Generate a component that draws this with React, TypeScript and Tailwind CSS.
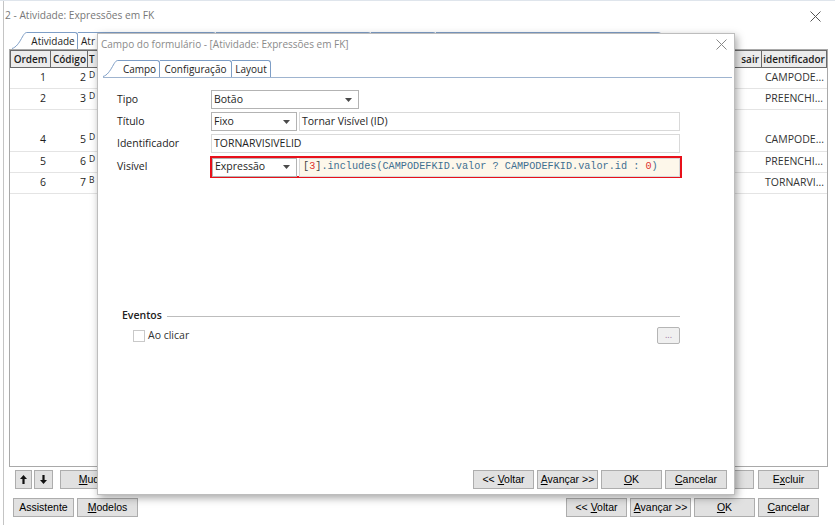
import React from "react";

const ui = "font-['Open_Sans',sans-serif]";
const btnFont = "font-['Liberation_Sans',sans-serif]";

function Caret() {
  return (
    <svg width="7" height="4" viewBox="0 0 7 4">
      <path d="M0 0h7L3.5 4z" fill="#4a4a4a" />
    </svg>
  );
}

function CloseX({ color = "#555" }: { color?: string }) {
  return (
    <svg width="11" height="11" viewBox="0 0 11 11">
      <path d="M0.5 0.5l10 10M10.5 0.5l-10 10" stroke={color} strokeWidth="1" />
    </svg>
  );
}

function TabSlant() {
  return (
    <svg width="15" height="17" viewBox="0 0 15 17" className="shrink-0">
      <path d="M0 16.5C4 15.5 7 11 9.5 6.5S13 0.5 15 0.5" fill="none" stroke="#7e9ec6" strokeWidth="1" />
    </svg>
  );
}

function Btn({ children, className = "" }: { children?: React.ReactNode; className?: string }) {
  return (
    <div
      className={`flex h-[19px] shrink-0 items-center justify-center overflow-hidden whitespace-nowrap border border-[#adadad] bg-[#e1e1e1] text-[10.5px] text-black ${btnFont} ${className}`}
    >
      <span>{children}</span>
    </div>
  );
}

function U({ children }: { children: React.ReactNode }) {
  return <span className="underline">{children}</span>;
}

function Select({ value, className = "" }: { value: string; className?: string }) {
  return (
    <div
      className={`flex h-[19px] shrink-0 items-center justify-between border border-[#b3b3b3] bg-white pl-[2px] pr-[6px] ${className}`}
    >
      <span>{value}</span>
      <Caret />
    </div>
  );
}

function Field({ label, children }: { label: string; children: React.ReactNode }) {
  return (
    <div className="flex items-center">
      <div className="w-[94px] shrink-0 text-[#222]">{label}</div>
      {children}
    </div>
  );
}

const rows = [
  { ordem: "1", codigo: "2", t: "D", id: "CAMPODE...", tall: false },
  { ordem: "2", codigo: "3", t: "D", id: "PREENCHI...", tall: false },
  { ordem: "4", codigo: "5", t: "D", id: "CAMPODE...", tall: true },
  { ordem: "5", codigo: "6", t: "D", id: "PREENCHI...", tall: false },
  { ordem: "6", codigo: "7", t: "B", id: "TORNARVI...", tall: false },
];

function Arrow({ up }: { up: boolean }) {
  return (
    <svg width="7" height="9" viewBox="0 0 7 9" className={up ? "" : "rotate-180"}>
      <path d="M3.5 0L7 4H4.6V9H2.4V4H0z" fill="#111" />
    </svg>
  );
}

export default function App() {
  return (
    <div className={`relative h-[525px] w-[835px] overflow-hidden bg-white text-[10.5px] text-[#1e1e1e] ${ui}`}>
      <div className="h-[1px] bg-[#dfe5ec]" />

      {/* Background window */}
      <div className="ml-[3px] flex h-[524px] flex-col border-l border-[#c4c4c4]">
        {/* Title */}
        <div className="flex h-[30px] items-center justify-between pl-[1px] pr-[14px]">
          <span className="text-[10.2px] text-[#777]">2 - Atividade: Expressões em FK</span>
          <CloseX />
        </div>

        {/* Tabs */}
        <div className="ml-[8px] flex h-[18px] items-end text-[10px]">
          <TabSlant />
          <div className="flex h-[17px] w-[51px] items-center justify-center rounded-tr-[3px] border-t border-r border-[#7e9ec6] bg-white pl-[2px]">
            Atividade
          </div>
          <div className="flex h-[17px] w-[138px] items-center rounded-tr-[3px] border-t border-r border-[#7e9ec6] pl-[3px]">
            Atr
          </div>
          <div className="h-[17px] w-[155px] rounded-tr-[3px] border-t border-r border-[#7e9ec6]" />
          <div className="h-[17px] w-[65px] rounded-tr-[3px] border-t border-r border-[#7e9ec6]" />
          <div className="h-[17px] w-[225px] rounded-tr-[3px] border-t border-r border-[#7e9ec6]" />
        </div>

        {/* Grid */}
        <div className="ml-[5px] flex h-[418px] w-[819px] flex-col border border-[#a9a9a9]">
          <div className="flex h-[18px] bg-[#ececec] text-[10px] font-semibold">
            <div className="flex w-[41px] items-center justify-center border border-[#6a6a6a]">Ordem</div>
            <div className="flex w-[37px] items-center justify-end border-y border-r border-[#6a6a6a] pr-[1px]">Código</div>
            <div className="flex flex-1 items-center border-y border-r border-[#6a6a6a] pl-[1px]">
              <span className="flex-1">T</span>
              <span className="pr-[2px]">sair</span>
            </div>
            <div className="flex w-[65px] items-center justify-center border-y border-r border-[#6a6a6a]">identificador</div>
          </div>
          {rows.map((r) => (
            <div
              key={r.ordem}
              className={`flex border-b border-[#e4e4e4] ${r.tall ? "h-[42px] items-end pb-[3px]" : "h-[21px] items-center"}`}
            >
              <div className="w-[41px] pr-[5px] text-right">{r.ordem}</div>
              <div className="w-[37px] pr-[2px] text-right">{r.codigo}</div>
              <div className="flex-1 pl-[1px]">
                <span className="relative -top-[3px] text-[8.5px]">{r.t}</span>
              </div>
              <div className="w-[65px] pl-[3px] text-[#333]">{r.id}</div>
            </div>
          ))}
        </div>

        {/* Bottom buttons */}
        <div className="mt-[3px] flex items-center pr-[16px]">
          <Btn className="ml-[11px] w-[17px]">
            <Arrow up />
          </Btn>
          <Btn className="ml-[2px] w-[19px]">
            <Arrow up={false} />
          </Btn>
          <Btn className="ml-[7px] w-[100px]">
            <U>M</U>udar ordem
          </Btn>
          <div className="flex-1" />
          <Btn className="w-[61px]" />
          <Btn className="ml-[4px] w-[61px]">
            E<U>x</U>cluir
          </Btn>
        </div>
        <div className="mt-[9px] flex items-center pr-[16px]">
          <Btn className="ml-[9px] w-[61px]">Assistente</Btn>
          <Btn className="ml-[3px] w-[61px]">
            <U>M</U>odelos
          </Btn>
          <div className="flex-1" />
          <Btn className="w-[61px]">
            &lt;&lt; <U>V</U>oltar
          </Btn>
          <Btn className="ml-[3px] w-[61px]">
            <U>A</U>vançar &gt;&gt;
          </Btn>
          <Btn className="ml-[3px] w-[61px]">
            <U>O</U>K
          </Btn>
          <Btn className="ml-[3px] w-[61px]">
            <U>C</U>ancelar
          </Btn>
        </div>
      </div>

      {/* Dialog */}
      <div className="absolute left-[97px] top-[33px] flex h-[462px] w-[638px] flex-col border border-[#bdbdbd] bg-white shadow-[2px_3px_8px_rgba(0,0,0,0.35)]">
        <div className="flex h-[21px] items-center justify-between pl-[3px] pr-[7px]">
          <span className="text-[10px] text-[#8a8a8a]">Campo do formulário - [Atividade: Expressões em FK]</span>
          <CloseX color="#888" />
        </div>

        {/* Tabs */}
        <div className="ml-[5px] mr-[2px] mt-[6px] flex h-[17px] items-end border-b border-[#9fb4cf] text-[10px]">
          <TabSlant />
          <div className="flex h-[17px] w-[42px] items-center justify-center rounded-tr-[3px] border-t border-r border-[#7e9ec6] bg-white pl-[2px]">
            Campo
          </div>
          <div className="flex h-[17px] w-[72px] items-center justify-center rounded-tr-[3px] border-t border-r border-[#7e9ec6]">
            Configuração
          </div>
          <div className="flex h-[17px] w-[39px] items-center justify-center rounded-tr-[3px] border-t border-r border-[#7e9ec6]">
            Layout
          </div>
        </div>

        {/* Form */}
        <div className="mt-[12px] flex flex-col gap-[3px] pl-[19px]">
          <Field label="Tipo">
            <Select value="Botão" className="w-[148px]" />
          </Field>
          <Field label="Título">
            <Select value="Fixo" className="w-[86px]" />
            <div className="ml-[2px] flex h-[19px] w-[381px] items-center border border-[#d9d9d9] pl-[2px]">
              Tornar Visível (ID)
            </div>
          </Field>
          <Field label="Identificador">
            <div className="flex h-[19px] w-[469px] items-center border border-[#d9d9d9] pl-[2px]">TORNARVISIVELID</div>
          </Field>
          <div className="flex items-center">
            <div className="w-[93px] shrink-0 text-[#222]">Visível</div>
            <div className="flex h-[22px] w-[472px] items-center gap-[2px] border-2 border-[#e8101a]">
              <Select value="Expressão" className="w-[85px]" />
              <div className="flex h-[19px] flex-1 items-center border border-[#d9d9d9] bg-[#fdf7ea] pl-[3px] font-['Liberation_Mono',monospace] text-[10.2px] text-[#3f6f91]">
                <span className="text-[#444]">[</span>
                <span className="text-[#e0302f]">3</span>
                <span className="text-[#444]">]</span>
                <span className="whitespace-pre">.includes(CAMPODEFKID.valor ? CAMPODEFKID.valor.id : </span>
                <span className="text-[#e0302f]">0</span>
                <span>)</span>
              </div>
            </div>
          </div>
        </div>

        {/* Eventos */}
        <div className="mt-[131px] flex h-[14px] items-center pl-[24px] pr-[54px]">
          <span className="font-semibold text-[#222]">Eventos</span>
          <div className="ml-[5px] h-[1px] flex-1 bg-[#bdbdbd]" />
        </div>
        <div className="mt-[4px] flex h-[17px] items-center pl-[35px] pr-[54px]">
          <div className="h-[12px] w-[12px] border border-[#c9c9c9] bg-white" />
          <span className="ml-[3px] text-[#333]">Ao clicar</span>
          <div className="flex-1" />
          <div className="flex h-[17px] w-[23px] items-center justify-center rounded-[2px] border border-[#b5b5b5] bg-[#f0f0f0] pb-[2px] text-[9px] leading-none text-[#a070a0]">
            ...
          </div>
        </div>

        <div className="flex-1" />
        <div className="mb-[5px] flex justify-end gap-[3px] pr-[7px]">
          <Btn className="w-[61px]">
            &lt;&lt; <U>V</U>oltar
          </Btn>
          <Btn className="w-[61px]">
            <U>A</U>vançar &gt;&gt;
          </Btn>
          <Btn className="w-[61px]">
            <U>O</U>K
          </Btn>
          <Btn className="w-[62px]">
            <U>C</U>ancelar
          </Btn>
        </div>
      </div>
    </div>
  );
}
